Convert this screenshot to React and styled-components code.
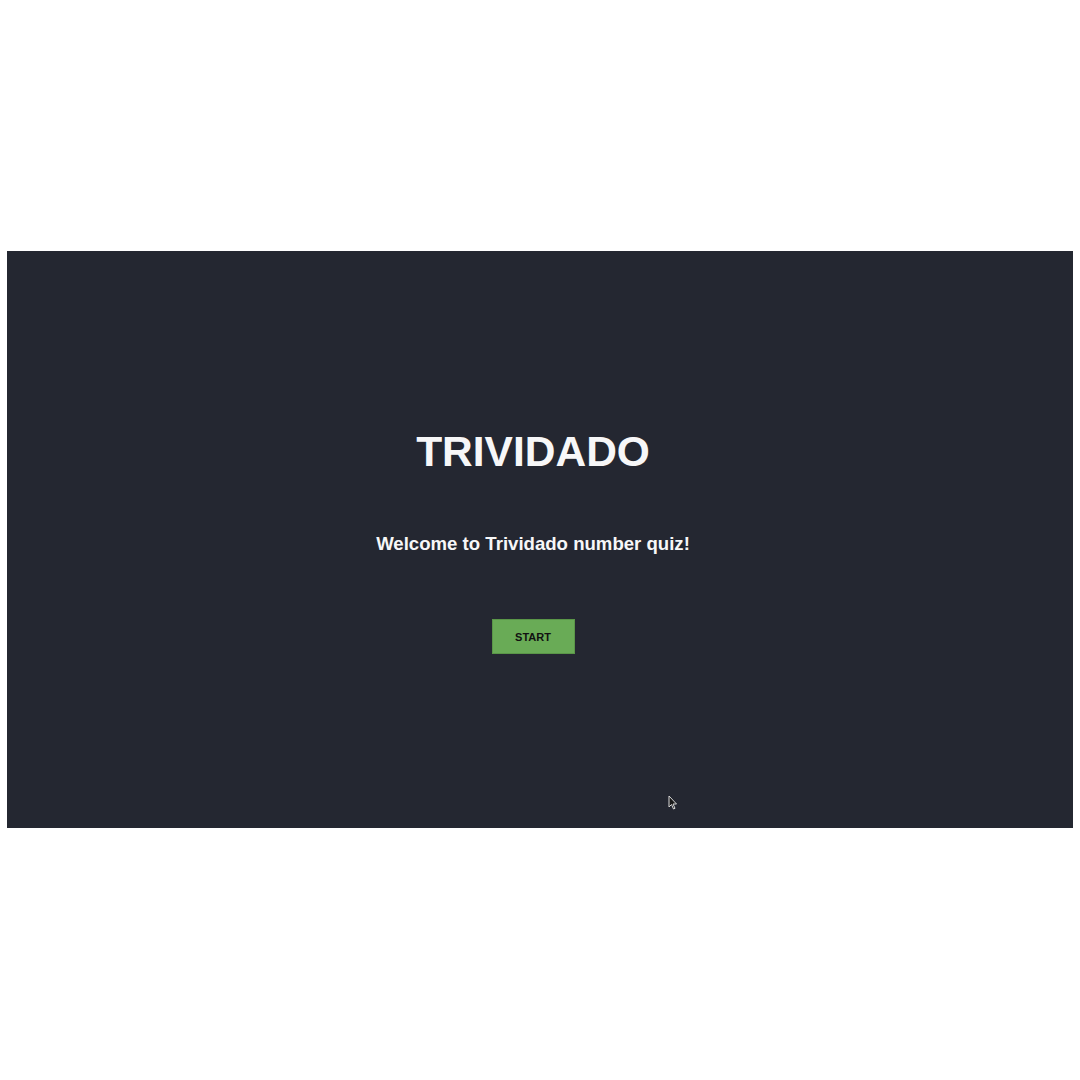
import styled, { createGlobalStyle } from 'styled-components';

const GlobalStyle = createGlobalStyle`
    html, body {
        margin: 0;
        padding: 0;
        background: #ffffff;
        font-family: "Liberation Sans", Arial, Helvetica, sans-serif;
    }
`;

const Page = styled.div`
    width: 1080px;
    height: 1080px;
    padding-top: 251px;
    padding-left: 7px;
    box-sizing: border-box;
`;

const Screen = styled.main`
    position: relative;
    width: 1066px;
    height: 577px;
    background: #242731;
    display: flex;
    flex-direction: column;
    align-items: center;
    padding: 177px 14px 0 0;
    box-sizing: border-box;
`;

const Title = styled.h1`
    margin: 0;
    font-size: 42.5px;
    line-height: 48px;
    font-weight: 700;
    color: #f7f7f8;
`;

const Subtitle = styled.p`
    margin: 57px 0 0;
    font-size: 18.6px;
    line-height: 22px;
    font-weight: 700;
    color: #f7f7f8;
`;

const StartButton = styled.button`
    margin-top: 64px;
    width: 83px;
    height: 35px;
    background: #69ab56;
    border: 1px solid #5a9648;
    color: #111;
    font-family: inherit;
    font-size: 11px;
    font-weight: 700;
    cursor: pointer;
    &:hover {
        background: #5e9d4c;
    }
`;

const Cursor = styled.svg`
    position: absolute;
    left: 661px;
    top: 544px;
`;

const App = () => {
    return (
        <>
            <GlobalStyle />
            <Page>
                <Screen>
                    <Title>TRIVIDADO</Title>
                    <Subtitle>Welcome to Trividado number quiz!</Subtitle>
                    <StartButton type="button">START</StartButton>
                    <Cursor width="10" height="15" viewBox="0 0 10 15">
                        <path
                            d="M1 1 L1 12 L3.5 9.5 L5.5 14 L7 13.3 L5 9 L8.5 9 Z"
                            fill="#1a1a1a"
                            stroke="#d8d8d8"
                            strokeWidth="1"
                            strokeLinejoin="round"
                        />
                    </Cursor>
                </Screen>
            </Page>
        </>
    );
};

export default App;
